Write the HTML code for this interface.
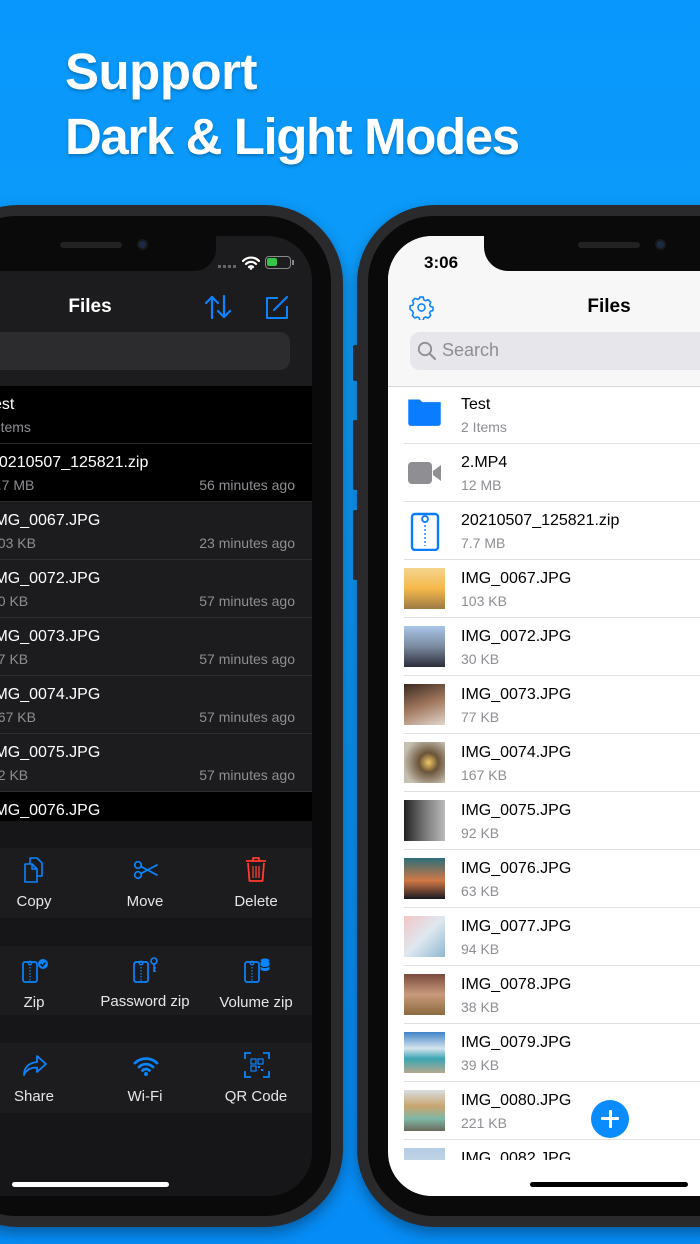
<!DOCTYPE html>
<html><head><meta charset="utf-8"><style>
*{margin:0;padding:0;box-sizing:border-box}
body{width:700px;height:1244px;overflow:hidden;position:relative;background:linear-gradient(180deg,#0897fc 0%,#0e9cf8 30%,#0a92f6 70%,#068cf6 100%);font-family:"Liberation Sans",sans-serif}
.abs{position:absolute}
.title{left:65px;color:#fff;font-weight:bold;font-size:51px;text-shadow:0 2px 3px rgba(0,0,0,.25);letter-spacing:-0.5px;white-space:nowrap}
.frame{position:absolute;background:#2a2a2c;border-radius:78px;box-shadow:0 6px 14px rgba(0,0,0,.35)}
.bez{position:absolute;background:#0a0a0a;border-radius:66px}
.scr{position:absolute;overflow:hidden;border-radius:44px}
.row{position:absolute;left:0;right:0;height:58px}
.nm{position:absolute;top:10px;font-size:16px}
.sz{position:absolute;top:33px;font-size:14px}
.tm{position:absolute;top:33px;right:17px;font-size:14px;color:#8e8e93}
.sep{position:absolute;left:16px;right:0;bottom:0;height:1px}
.lab{position:absolute;width:110px;text-align:center;color:#e6e6e6;font-size:15px}
.thumb{position:absolute;left:16px;top:8px;width:41px;height:41px}
</style></head><body>
<div class="abs title" style="top:42px">Support</div>
<div class="abs title" style="top:107px;letter-spacing:-1.4px">Dark &amp; Light Modes</div>

<!-- LEFT PHONE -->
<div class="frame" style="left:-60px;top:205px;width:403px;height:1022px"></div>
<div class="bez" style="left:-50px;top:216px;width:381px;height:1000px"></div>
<div class="scr" style="left:-40px;top:236px;width:352px;height:960px;background:#1c1c1e;border-radius:0 44px 44px 0">
  <div class="abs" style="left:0;top:-2px;width:256px;height:37px;background:#0a0a0a;border-radius:0 0 22px 0"></div>
  <div class="abs" style="left:100px;top:6px;width:62px;height:6px;border-radius:3px;background:#222"></div>
  <div class="abs" style="left:177px;top:3px;width:11px;height:11px;border-radius:50%;background:#1b2a44;border:2px solid #1a1a1a"></div>
  <div class="abs" style="left:258px;top:29px;width:20px;height:3px;background:repeating-linear-gradient(90deg,#666 0 3px,transparent 3px 5px)"></div>
  <svg class="abs" style="left:282px;top:20px" width="18" height="14" viewBox="0 0 18 14"><path d="M1 5a11 11 0 0 1 16 0M4 8a7 7 0 0 1 10 0M7 11a3 3 0 0 1 4 0" stroke="#fff" stroke-width="2.2" fill="none" stroke-linecap="round"/><circle cx="9" cy="12.5" r="1.3" fill="#fff"/></svg>
  <div class="abs" style="left:305px;top:20px;width:26px;height:13px;border:1.5px solid #888;border-radius:4px"><div style="position:absolute;left:1px;top:1px;width:10px;height:8px;background:#33c748;border-radius:2px"></div></div>
  <div class="abs" style="left:332px;top:24px;width:2px;height:5px;background:#888"></div>
  <div class="abs" style="left:70px;top:60px;width:120px;text-align:center;color:#fff;font-weight:bold;font-size:19px">Files</div>
  <svg class="abs" style="left:244px;top:58px" width="28" height="26" viewBox="0 0 28 26"><path d="M8 24V3M2 9l6-6 6 6M20 2v21M14 17l6 6 6-6" stroke="#0a84ff" stroke-width="2.2" fill="none" stroke-linecap="round" stroke-linejoin="round"/></svg>
  <svg class="abs" style="left:304px;top:58px" width="26" height="26" viewBox="0 0 26 26"><path d="M14 4H3v20h20V12" stroke="#0a84ff" stroke-width="2" fill="none" stroke-linejoin="round"/><path d="M10 16l13-13" stroke="#0a84ff" stroke-width="2" stroke-linecap="round"/></svg>
  <div class="abs" style="left:0;top:96px;width:330px;height:38px;background:#2c2c2e;border-radius:10px"></div>
  <div class="abs" style="left:0;top:150px;width:352px;height:1px;background:#333"></div>
  <div class="row" style="top:150px;background:#000"><div class="nm" style="color:#fff;left:25px">Test</div><div class="sz" style="left:25px;color:#8e8e93">2 Items</div><div class="sep" style="background:#2a2a2c;left:0"></div></div>
  <div class="row" style="top:208px;background:#000"><div class="nm" style="left:30px;color:#fff">20210507_125821.zip</div><div class="sz" style="left:30px;color:#8e8e93">7.7 MB</div><div class="tm">56 minutes ago</div><div class="sep" style="background:#2a2a2c;left:0"></div></div>
  <div class="row" style="top:266px"><div class="nm" style="left:30px;color:#fff">IMG_0067.JPG</div><div class="sz" style="left:30px;color:#8e8e93">103 KB</div><div class="tm">23 minutes ago</div><div class="sep" style="background:#2e2e30;left:0"></div></div>
  <div class="row" style="top:324px"><div class="nm" style="left:30px;color:#fff">IMG_0072.JPG</div><div class="sz" style="left:30px;color:#8e8e93">30 KB</div><div class="tm">57 minutes ago</div><div class="sep" style="background:#2e2e30;left:0"></div></div>
  <div class="row" style="top:382px"><div class="nm" style="left:30px;color:#fff">IMG_0073.JPG</div><div class="sz" style="left:30px;color:#8e8e93">77 KB</div><div class="tm">57 minutes ago</div><div class="sep" style="background:#2e2e30;left:0"></div></div>
  <div class="row" style="top:440px"><div class="nm" style="left:30px;color:#fff">IMG_0074.JPG</div><div class="sz" style="left:30px;color:#8e8e93">167 KB</div><div class="tm">57 minutes ago</div><div class="sep" style="background:#2e2e30;left:0"></div></div>
  <div class="row" style="top:498px"><div class="nm" style="left:30px;color:#fff">IMG_0075.JPG</div><div class="sz" style="left:30px;color:#8e8e93">92 KB</div><div class="tm">57 minutes ago</div><div class="sep" style="background:#2e2e30;left:0"></div></div>
  <div class="row" style="top:556px;height:29px;background:#000;overflow:hidden"><div class="nm" style="left:30px;color:#fff">IMG_0076.JPG</div></div>
  <div class="abs" style="left:0;top:585px;width:352px;height:375px;background:#161618"></div>
  <div class="abs" style="left:0;top:612px;width:352px;height:70px;background:#1c1c1e"></div>
  <div class="abs" style="left:0;top:710px;width:352px;height:69px;background:#1c1c1e"></div>
  <div class="abs" style="left:0;top:807px;width:352px;height:70px;background:#1c1c1e"></div>
  <svg class="abs" style="left:62px;top:621px" width="24" height="26" viewBox="0 0 24 26"><path d="M8 1h7l5 5v13H8z" stroke="#0a84ff" stroke-width="1.6" fill="none" stroke-linejoin="round"/><path d="M3 7h7l5 5v13H3z" stroke="#0a84ff" stroke-width="1.6" fill="#1c1c1e" stroke-linejoin="round"/><path d="M10 7v5h5" stroke="#0a84ff" stroke-width="1.4" fill="none"/></svg>
  <div class="lab" style="left:19px;top:657px">Copy</div>
  <svg class="abs" style="left:173px;top:624px" width="26" height="20" viewBox="0 0 26 20"><circle cx="5" cy="5" r="3.3" stroke="#0a84ff" stroke-width="1.7" fill="none"/><circle cx="5" cy="15" r="3.3" stroke="#0a84ff" stroke-width="1.7" fill="none"/><path d="M8 6.5L24 15M8 13.5L24 5" stroke="#0a84ff" stroke-width="1.8" stroke-linecap="round"/></svg>
  <div class="lab" style="left:130px;top:657px">Move</div>
  <svg class="abs" style="left:285px;top:621px" width="22" height="25" viewBox="0 0 22 25"><path d="M1 4h20M8 4V1h6v3M3 6l1.5 18h13L19 6" stroke="#ff3b30" stroke-width="1.8" fill="none" stroke-linejoin="round"/><path d="M8 9v12M11 9v12M14 9v12" stroke="#ff3b30" stroke-width="1.3"/></svg>
  <div class="lab" style="left:241px;top:657px">Delete</div>
  <svg class="abs" style="left:61px;top:722px" width="28" height="26" viewBox="0 0 28 26"><rect x="2" y="4" width="14" height="20" rx="2" stroke="#0a84ff" stroke-width="1.7" fill="none"/><path d="M9 3v20" stroke="#0a84ff" stroke-width="1.2" stroke-dasharray="1.5 1.5"/><circle cx="9" cy="5" r="1.8" stroke="#0a84ff" stroke-width="1.2" fill="none"/><circle cx="22" cy="6" r="5" fill="#0a84ff"/><path d="M19.5 6l2 2 3-3.5" stroke="#1c1c1e" stroke-width="1.5" fill="none"/></svg>
  <div class="lab" style="left:19px;top:758px">Zip</div>
  <svg class="abs" style="left:172px;top:721px" width="28" height="27" viewBox="0 0 28 27"><rect x="2" y="5" width="14" height="20" rx="2" stroke="#0a84ff" stroke-width="1.7" fill="none"/><path d="M9 4v20" stroke="#0a84ff" stroke-width="1.2" stroke-dasharray="1.5 1.5"/><circle cx="9" cy="6" r="1.8" stroke="#0a84ff" stroke-width="1.2" fill="none"/><circle cx="22" cy="4" r="3" stroke="#0a84ff" stroke-width="1.6" fill="none"/><path d="M22 7v8M22 11h2M22 14h2" stroke="#0a84ff" stroke-width="1.6"/></svg>
  <div class="lab" style="left:130px;top:757px">Password zip</div>
  <svg class="abs" style="left:283px;top:721px" width="28" height="27" viewBox="0 0 28 27"><rect x="2" y="5" width="14" height="20" rx="2" stroke="#0a84ff" stroke-width="1.7" fill="none"/><path d="M9 4v20" stroke="#0a84ff" stroke-width="1.2" stroke-dasharray="1.5 1.5"/><circle cx="9" cy="6" r="1.8" stroke="#0a84ff" stroke-width="1.2" fill="none"/><ellipse cx="22" cy="3.5" rx="4.5" ry="2" fill="#0a84ff"/><path d="M17.5 5v7c0 1.2 2 2 4.5 2s4.5-.8 4.5-2V5" fill="#0a84ff"/><path d="M17.5 8.5c0 1.2 2 2 4.5 2s4.5-.8 4.5-2" stroke="#1c1c1e" stroke-width="1" fill="none"/></svg>
  <div class="lab" style="left:241px;top:758px">Volume zip</div>
  <svg class="abs" style="left:62px;top:818px" width="26" height="24" viewBox="0 0 26 24"><path d="M15 2l9 8-9 8v-4.5C8 13.5 4 16 2 21c0-7 4-12 13-13z" stroke="#0a84ff" stroke-width="1.8" fill="none" stroke-linejoin="round"/></svg>
  <div class="lab" style="left:19px;top:852px">Share</div>
  <svg class="abs" style="left:173px;top:819px" width="26" height="22" viewBox="0 0 26 22"><path d="M2 8a16 16 0 0 1 22 0M6 12a10 10 0 0 1 14 0M9.5 15.5a5 5 0 0 1 7 0" stroke="#0a84ff" stroke-width="2.8" fill="none" stroke-linecap="round"/><circle cx="13" cy="19" r="2" fill="#0a84ff"/></svg>
  <div class="lab" style="left:130px;top:852px">Wi-Fi</div>
  <svg class="abs" style="left:284px;top:816px" width="26" height="26" viewBox="0 0 26 26"><path d="M1 7V1h6M19 1h6v6M25 19v6h-6M7 25H1v-6" stroke="#0a84ff" stroke-width="1.8" fill="none"/><rect x="7" y="7" width="5" height="5" stroke="#0a84ff" stroke-width="1.2" fill="none"/><rect x="14" y="7" width="5" height="5" stroke="#0a84ff" stroke-width="1.2" fill="none"/><rect x="7" y="14" width="5" height="5" stroke="#0a84ff" stroke-width="1.2" fill="none"/><path d="M14 14h2v2h-2zM17 17h2v2h-2z" fill="#0a84ff"/></svg>
  <div class="lab" style="left:241px;top:852px">QR Code</div>
  <div class="abs" style="left:52px;top:946px;width:157px;height:5px;border-radius:3px;background:#fff"></div>
</div>

<!-- RIGHT PHONE -->
<div class="frame" style="left:357px;top:205px;width:420px;height:1022px"></div>
<div class="bez" style="left:368px;top:216px;width:400px;height:1000px"></div>
<div class="abs" style="left:353px;top:345px;width:5px;height:36px;background:#2a2a2c;border-radius:2px"></div>
<div class="abs" style="left:353px;top:420px;width:5px;height:70px;background:#2a2a2c;border-radius:2px"></div>
<div class="abs" style="left:353px;top:510px;width:5px;height:70px;background:#2a2a2c;border-radius:2px"></div>
<div class="scr" style="left:388px;top:236px;width:360px;height:960px;background:#fff">
  <div class="abs" style="left:0;top:0;width:360px;height:150px;background:#f7f7f7"></div>
  <div class="abs" style="left:96px;top:-2px;width:300px;height:37px;background:#0a0a0a;border-radius:0 0 0 24px"></div>
  <div class="abs" style="left:190px;top:6px;width:62px;height:6px;border-radius:3px;background:#222"></div>
  <div class="abs" style="left:267px;top:3px;width:11px;height:11px;border-radius:50%;background:#1b2a44;border:2px solid #1a1a1a"></div>
  <div class="abs" style="left:36px;top:17px;font-size:17px;font-weight:bold;color:#000">3:06</div>
  <svg class="abs" style="left:21px;top:59px" width="25" height="25" viewBox="0 0 24 24"><path d="M10.3 2h3.4l.5 2.6 1.7.9 2.5-1 2.4 2.4-1 2.5.8 1.7 2.4.5v3.4l-2.4.5-.8 1.7 1 2.5-2.4 2.4-2.5-1-1.7.8-.5 2.6h-3.4l-.5-2.6-1.7-.8-2.5 1-2.4-2.4 1-2.5-.8-1.7L1 13.7v-3.4l2.6-.5.8-1.7-1-2.5 2.4-2.4 2.5 1 1.7-.9z" stroke="#0a84ff" stroke-width="1.5" fill="none" stroke-linejoin="round"/><circle cx="12" cy="12" r="3.4" stroke="#0a84ff" stroke-width="1.5" fill="none"/></svg>
  <div class="abs" style="left:161px;top:60px;width:120px;text-align:center;color:#000;font-weight:bold;font-size:19px">Files</div>
  <div class="abs" style="left:22px;top:96px;width:340px;height:38px;background:#e6e6eb;border-radius:10px"></div>
  <svg class="abs" style="left:29px;top:105px" width="20" height="20" viewBox="0 0 20 20"><circle cx="8" cy="8" r="6.2" stroke="#8e8e93" stroke-width="1.8" fill="none"/><path d="M12.5 12.5l5.5 5.5" stroke="#8e8e93" stroke-width="2" stroke-linecap="round"/></svg>
  <div class="abs" style="left:54px;top:104px;font-size:18px;color:#8e8e93">Search</div>
  <div class="abs" style="left:0;top:150px;width:360px;height:1px;background:#d5d5d8"></div>

  <div class="row" style="top:150px"><svg class="thumb" viewBox="0 0 41 41" style="top:10px;height:36px"><path d="M2 4h13l3 3h21v4H2z" fill="#0a7cff"/><rect x="2" y="9" width="37" height="25" rx="3" fill="#0a7cff"/></svg><div class="nm" style="left:73px">Test</div><div class="sz" style="left:73px;color:#8e8e93">2 Items</div><div class="sep" style="background:#e0e0e3"></div></div>
  <div class="row" style="top:208px"><svg class="thumb" viewBox="0 0 41 41"><rect x="4" y="10" width="24" height="22" rx="4" fill="#8e8e93"/><path d="M29 19l8-6v16l-8-6z" fill="#8e8e93"/></svg><div class="nm" style="left:73px">2.MP4</div><div class="sz" style="left:73px;color:#8e8e93">12 MB</div><div class="sep" style="background:#e0e0e3"></div></div>
  <div class="row" style="top:266px"><svg class="thumb" viewBox="0 0 41 41"><rect x="8" y="4" width="26" height="36" rx="3" stroke="#0a7cff" stroke-width="2.4" fill="none"/><path d="M21 3v33" stroke="#0a7cff" stroke-width="1.4" stroke-dasharray="2 2"/><circle cx="21" cy="9" r="3" stroke="#0a7cff" stroke-width="1.8" fill="#fff"/></svg><div class="nm" style="left:73px">20210507_125821.zip</div><div class="sz" style="left:73px;color:#8e8e93">7.7 MB</div><div class="sep" style="background:#e0e0e3"></div></div>
  <div class="row" style="top:324px"><div class="thumb" style="background:linear-gradient(180deg,#f3d48d,#f6b84a 50%,#9d7a44)"></div><div class="nm" style="left:73px">IMG_0067.JPG</div><div class="sz" style="left:73px;color:#8e8e93">103 KB</div><div class="sep" style="background:#e0e0e3"></div></div>
  <div class="row" style="top:382px"><div class="thumb" style="background:linear-gradient(180deg,#a9c6e8,#7a8aa0 50%,#2c2d3a)"></div><div class="nm" style="left:73px">IMG_0072.JPG</div><div class="sz" style="left:73px;color:#8e8e93">30 KB</div><div class="sep" style="background:#e0e0e3"></div></div>
  <div class="row" style="top:440px"><div class="thumb" style="background:linear-gradient(160deg,#3a2a22,#a0765c 50%,#e2d6cc)"></div><div class="nm" style="left:73px">IMG_0073.JPG</div><div class="sz" style="left:73px;color:#8e8e93">77 KB</div><div class="sep" style="background:#e0e0e3"></div></div>
  <div class="row" style="top:498px"><div class="thumb" style="background:radial-gradient(circle at 60% 50%,#f2c866 0,#6b5338 30%,#c6c0b2 80%)"></div><div class="nm" style="left:73px">IMG_0074.JPG</div><div class="sz" style="left:73px;color:#8e8e93">167 KB</div><div class="sep" style="background:#e0e0e3"></div></div>
  <div class="row" style="top:556px"><div class="thumb" style="background:linear-gradient(90deg,#222,#777 50%,#bbb)"></div><div class="nm" style="left:73px">IMG_0075.JPG</div><div class="sz" style="left:73px;color:#8e8e93">92 KB</div><div class="sep" style="background:#e0e0e3"></div></div>
  <div class="row" style="top:614px"><div class="thumb" style="background:linear-gradient(180deg,#2c6d78,#d27845 55%,#1a1a22)"></div><div class="nm" style="left:73px">IMG_0076.JPG</div><div class="sz" style="left:73px;color:#8e8e93">63 KB</div><div class="sep" style="background:#e0e0e3"></div></div>
  <div class="row" style="top:672px"><div class="thumb" style="background:linear-gradient(135deg,#f2c6c6,#dfe8f0 50%,#8fb8d2)"></div><div class="nm" style="left:73px">IMG_0077.JPG</div><div class="sz" style="left:73px;color:#8e8e93">94 KB</div><div class="sep" style="background:#e0e0e3"></div></div>
  <div class="row" style="top:730px"><div class="thumb" style="background:linear-gradient(180deg,#7a4a3e,#c99a7c 50%,#8a6a3e)"></div><div class="nm" style="left:73px">IMG_0078.JPG</div><div class="sz" style="left:73px;color:#8e8e93">38 KB</div><div class="sep" style="background:#e0e0e3"></div></div>
  <div class="row" style="top:788px"><div class="thumb" style="background:linear-gradient(180deg,#3f83c8,#d6e4ee 40%,#3aa6b4 65%,#b6a88e)"></div><div class="nm" style="left:73px">IMG_0079.JPG</div><div class="sz" style="left:73px;color:#8e8e93">39 KB</div><div class="sep" style="background:#e0e0e3"></div></div>
  <div class="row" style="top:846px"><div class="thumb" style="background:linear-gradient(180deg,#d8dde0,#c8a46e 40%,#7fb8a8 70%,#6a6a5a)"></div><div class="nm" style="left:73px">IMG_0080.JPG</div><div class="sz" style="left:73px;color:#8e8e93">221 KB</div><div class="sep" style="background:#e0e0e3"></div></div>
  <div class="row" style="top:904px;height:20px;overflow:hidden"><div class="thumb" style="background:linear-gradient(180deg,#b4cce4,#dfe6ea)"></div><div class="nm" style="left:73px">IMG_0082.JPG</div></div>
  <div class="abs" style="left:0;top:924px;width:360px;height:36px;background:#fff"></div>
  <div class="abs" style="left:203px;top:864px;width:38px;height:38px;border-radius:50%;background:#0a8cff"></div>
  <div class="abs" style="left:213px;top:881px;width:18px;height:3px;background:#fff;border-radius:1px"></div>
  <div class="abs" style="left:220.5px;top:874px;width:3px;height:18px;background:#fff;border-radius:1px"></div>
  <div class="abs" style="left:142px;top:946px;width:158px;height:5px;border-radius:3px;background:#000"></div>
</div>
</body></html>
